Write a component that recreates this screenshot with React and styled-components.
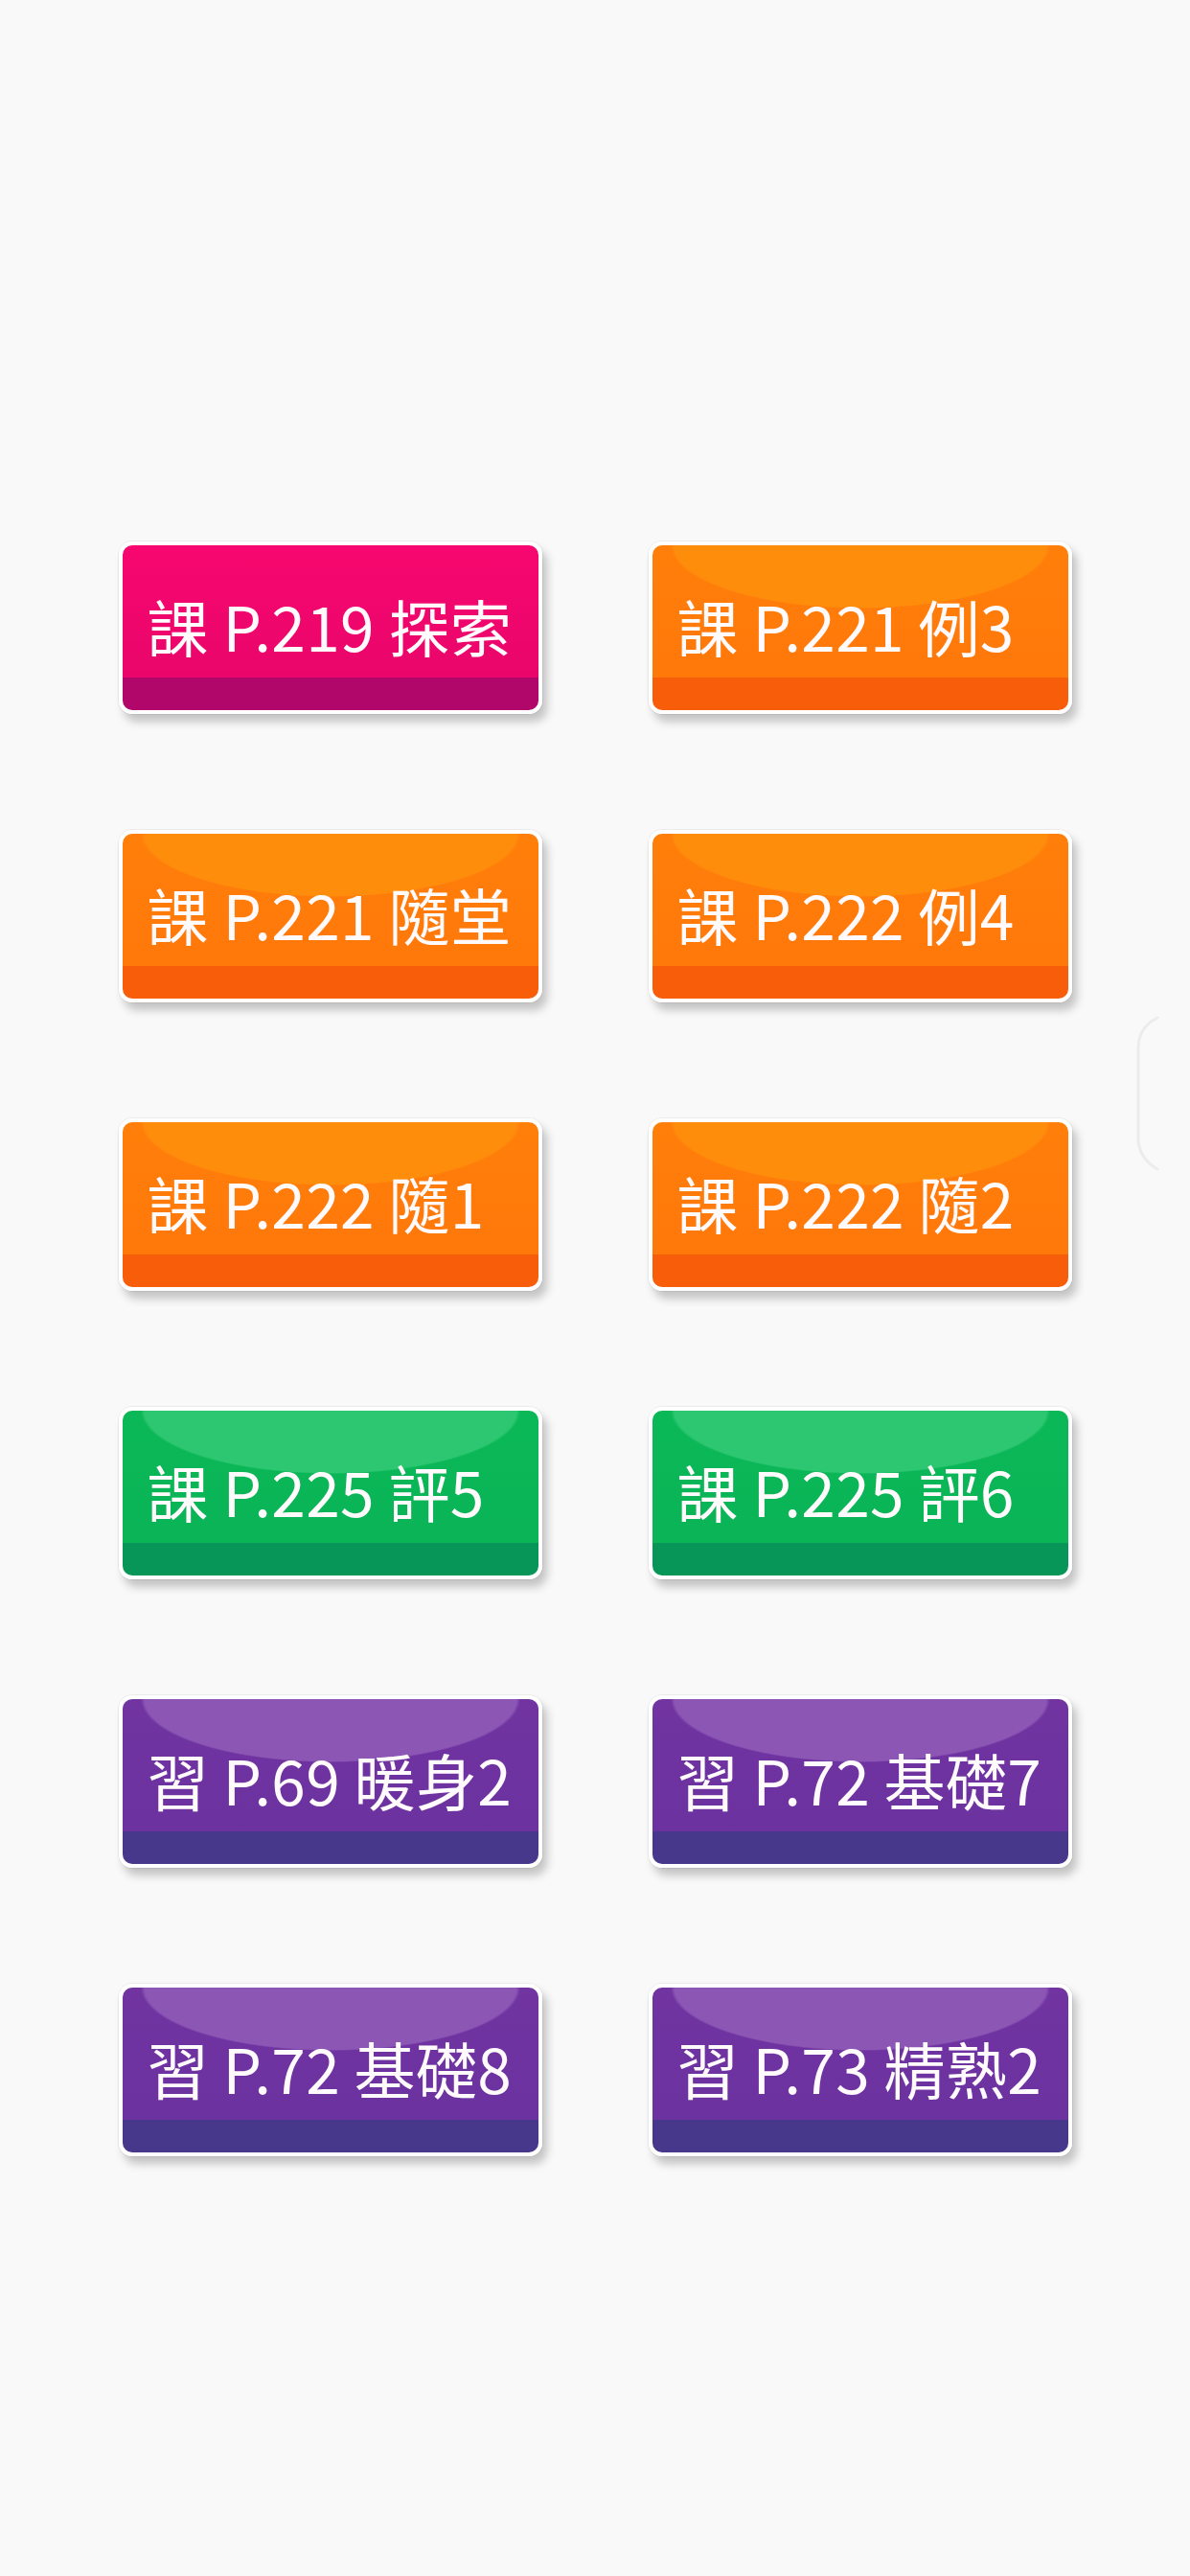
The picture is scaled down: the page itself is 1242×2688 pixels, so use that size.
import React from "react";
import styled, { createGlobalStyle } from "styled-components";

const GlobalStyle = createGlobalStyle`
  html, body {
    margin: 0;
    padding: 0;
    background: #f9f9f9;
  }
  body {
    font-family: "Noto Sans CJK TC", "Noto Sans", sans-serif;
  }
`;

const palettes = {
  pink: { top: "#f7076f", main: "#e9066b", band: "#b1076b", gloss: null },
  orange: { top: "#ff7f0a", main: "#ff780a", band: "#f85e0a", gloss: "#ff8d0c" },
  green: { top: "#0bb857", main: "#0ab457", band: "#089658", gloss: "#2dc771" },
  purple: { top: "#7134a1", main: "#6b32a0", band: "#47388b", gloss: "#8b56b4" },
};

const Page = styled.div`
  min-height: 2688px;
  box-sizing: border-box;
  padding-top: 565px;
  position: relative;
`;

const Grid = styled.div`
  display: grid;
  grid-template-columns: repeat(2, 442px);
  column-gap: 111px;
  row-gap: 121px;
  justify-content: center;
`;

const Button = styled.button`
  box-sizing: border-box;
  width: 442px;
  height: 180px;
  border: 4px solid #fff;
  border-radius: 14px;
  padding: 0 0 6px 26px;
  display: flex;
  align-items: center;
  justify-content: flex-start;
  font-family: "Noto Sans CJK TC", "Noto Sans", sans-serif;
  font-size: 64px;
  font-weight: 400;
  letter-spacing: 0.3px;
  color: #fffafc;
  white-space: nowrap;
  cursor: pointer;
  box-shadow: 0 0 0 1px rgba(0, 0, 0, 0.05), 5px 8px 10px rgba(0, 0, 0, 0.22);
  background: ${({ $p }) =>
    [
      $p.gloss
        ? `radial-gradient(198px 66px at 50% 0, ${$p.gloss} 98%, transparent 100%)`
        : null,
      `linear-gradient(to bottom, ${$p.top} 0, ${$p.main} calc(100% - 34px), ${$p.band} calc(100% - 34px), ${$p.band} 100%)`,
    ]
      .filter(Boolean)
      .join(", ")};
`;

const EdgeHandle = styled.svg`
  position: absolute;
  right: 30px;
  top: 1058px;
`;

const items = [
  ["課 P.219 探索", "pink"],
  ["課 P.221 例3", "orange"],
  ["課 P.221 隨堂", "orange"],
  ["課 P.222 例4", "orange"],
  ["課 P.222 隨1", "orange"],
  ["課 P.222 隨2", "orange"],
  ["課 P.225 評5", "green"],
  ["課 P.225 評6", "green"],
  ["習 P.69 暖身2", "purple"],
  ["習 P.72 基礎7", "purple"],
  ["習 P.72 基礎8", "purple"],
  ["習 P.73 精熟2", "purple"],
];

export default function App() {
  return (
    <>
      <GlobalStyle />
      <Page>
        <Grid>
          {items.map(([label, color]) => (
            <Button key={label} $p={palettes[color]}>
              {label}
            </Button>
          ))}
        </Grid>
        <EdgeHandle width="30" height="170" viewBox="0 0 30 170">
          <path
            d="M26 4 Q6 14 6 36 L6 130 Q6 150 26 162"
            fill="none"
            stroke="#ececec"
            strokeWidth="3"
            strokeLinecap="round"
          />
        </EdgeHandle>
      </Page>
    </>
  );
}
